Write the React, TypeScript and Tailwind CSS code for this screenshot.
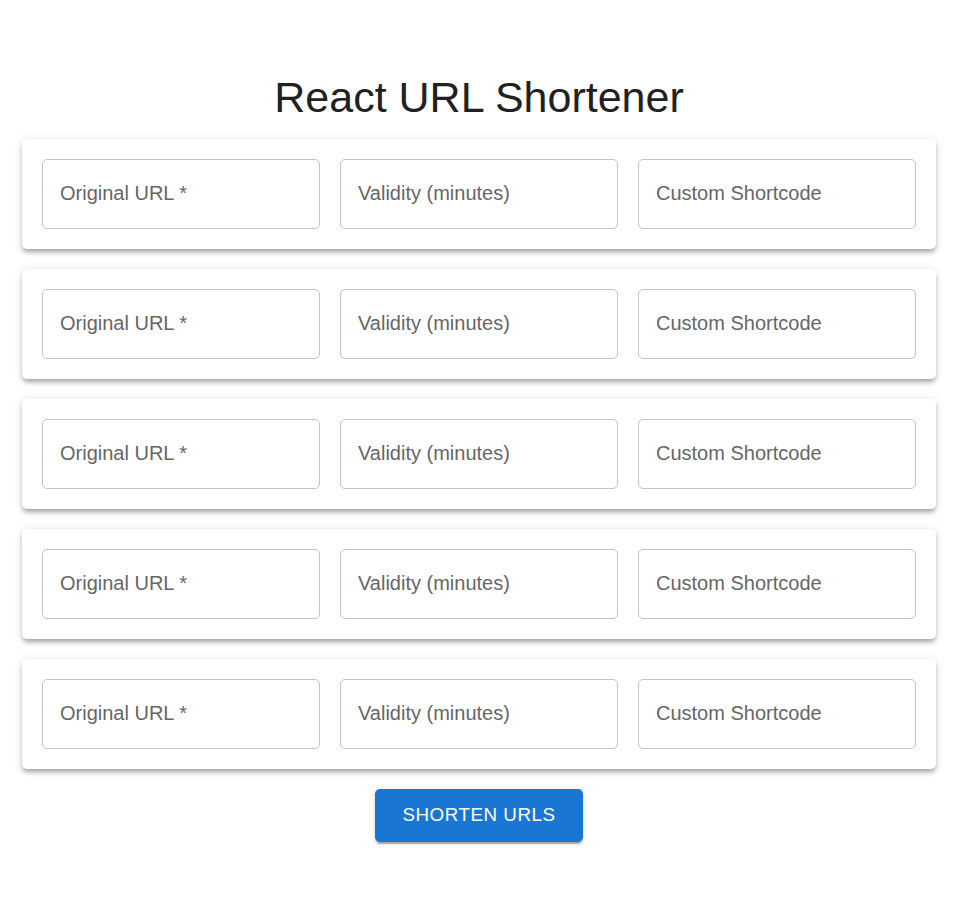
const fields = ["Original URL *", "Validity (minutes)", "Custom Shortcode"];

const Field = ({ label }: { label: string }) => {
  return (
    <div className="flex h-[70px] items-center rounded-[5px] border border-[#c4c4c4] bg-white px-[17px] pb-[2px]">
      <span className="text-[20px] text-[#666666]">{label}</span>
    </div>
  );
};

const App = () => {
  return (
    <div className="min-h-[904px] bg-white pt-[71px] font-['Liberation_Sans',Arial,sans-serif]">
      <div className="ml-[22px] w-[914px]">
        <h1 className="mb-[15px] text-center text-[43px] leading-[52.5px] font-normal text-[#212121]">
          React URL Shortener
        </h1>
        <div className="flex flex-col gap-[20px]">
          {[0, 1, 2, 3, 4].map((i) => (
            <div
              key={i}
              className="grid grid-cols-3 gap-[20px] rounded-[5px] bg-white p-[20px] shadow-[0px_4px_4px_-2px_rgba(0,0,0,0.2),0px_4px_5px_0px_rgba(0,0,0,0.14),0px_1px_10px_0px_rgba(0,0,0,0.12)]"
            >
              {fields.map((f) => (
                <Field key={f} label={f} />
              ))}
            </div>
          ))}
        </div>
        <div className="mt-[20px] flex justify-center">
          <button className="h-[53px] w-[208px] rounded-[5px] bg-[#1976d2] text-[18.75px] tracking-[0.02857em] text-white uppercase shadow-[0px_4px_1px_-2px_rgba(0,0,0,0.2),0px_2px_2px_0px_rgba(0,0,0,0.14),0px_1px_6px_0px_rgba(0,0,0,0.12)]">
            Shorten URLs
          </button>
        </div>
      </div>
    </div>
  );
};

export default App;
